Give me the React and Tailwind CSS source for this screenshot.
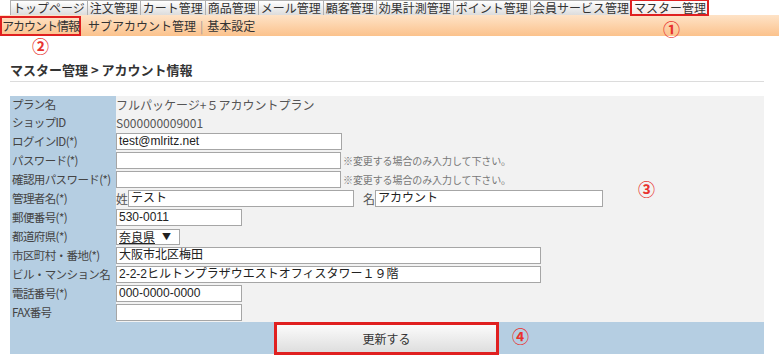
import React from "react";

const tabs = [
  "トップページ",
  "注文管理",
  "カート管理",
  "商品管理",
  "メール管理",
  "顧客管理",
  "効果計測管理",
  "ポイント管理",
  "会員サービス管理",
  "マスター管理",
];

const font = { fontFamily: '"Noto Sans CJK JP", "Liberation Sans", sans-serif' };

const Mark = ({ children, className }) => (
  <span
    className={`absolute text-[17px] leading-none font-bold text-[#e8322e] ${className}`}
  >
    {children}
  </span>
);

const Input = ({ value = "", w }) => (
  <div
    className={`${w} h-[17px] bg-white border border-[#a6a6a6] px-[2px] text-[12px] leading-[15px] text-[#222] overflow-hidden whitespace-nowrap`}
    style={{ fontFamily: '"Liberation Sans", "Noto Sans CJK JP", sans-serif' }}
  >
    {value}
  </div>
);

const Note = () => (
  <span className="ml-[2px] text-[10px] tracking-[-0.1px] text-[#777]">
    ※変更する場合のみ入力して下さい。
  </span>
);

const Row = ({ label, h = "h-[19px]", children }) => (
  <div className={`flex ${h}`}>
    <div className="w-[106px] shrink-0 bg-[#b5cee2] pl-[2px] flex items-center text-[11.5px] text-[#444] whitespace-nowrap tracking-[-0.6px]">
      {label}
    </div>
    <div className="flex-1 bg-[#f2f2f2] flex items-center text-[12px] text-[#555]">
      {children}
    </div>
  </div>
);

export default function App() {
  return (
    <div className="relative w-[779px] h-[363px] bg-white overflow-hidden" style={font}>
      {/* top tabs */}
      <div className="flex h-[15px] pl-[10px]">
        {tabs.map((t, i) => {
          const active = i === tabs.length - 1;
          return (
            <div
              key={t}
              className={`h-[15px] pl-[2px] pr-[2px] border-l border-t border-[#b0b0b0] text-[12px] leading-[14px] text-[#333] whitespace-nowrap ${
                active
                  ? "bg-gradient-to-b from-white to-[#f4e8e4] outline-2 outline-[#e02020] -outline-offset-1"
                  : "bg-gradient-to-b from-white to-[#dcdcdc]"
              }`}
            >
              {t}
            </div>
          );
        })}
      </div>

      {/* sub nav */}
      <div className="flex items-center h-[21px] bg-gradient-to-b from-[#fee3c7] to-[#fbc28c] text-[12px] text-[#333]">
        <span className="h-[20px] px-0 border-2 border-[#e02020] leading-[16px] tracking-[-1px]">
          アカウント情報
        </span>
        <span className="ml-[7px]">サブアカウント管理</span>
        <span className="mx-[4px] text-[#999]">|</span>
        <span>基本設定</span>
      </div>

      {/* heading */}
      <div className="ml-[10px] w-[754px] mt-[25px] pb-[2px] border-b border-[#dcdcdc] text-[13px] leading-[18px] font-bold text-[#333]">
        マスター管理 &gt; アカウント情報
      </div>

      {/* form table */}
      <div className="ml-[10px] w-[754px] mt-[14px]">
        <Row label="プラン名" h="h-[18px]">
          フルパッケージ+５アカウントプラン
        </Row>
        <Row label="ショップID" h="h-[18px]">
          S000000009001
        </Row>
        <Row label="ログインID(*)">
          <Input value="test@mlritz.net" w="w-[226px]" />
        </Row>
        <Row label="パスワード(*)">
          <Input w="w-[225px]" />
          <Note />
        </Row>
        <Row label="確認用パスワード(*)">
          <Input w="w-[225px]" />
          <Note />
        </Row>
        <Row label="管理者名(*)">
          <span>姓</span>
          <Input value="テスト" w="w-[226px]" />
          <span className="ml-[9px]">名</span>
          <Input value="アカウント" w="w-[228px]" />
        </Row>
        <Row label="郵便番号(*)">
          <Input value="530-0011" w="w-[126px]" />
        </Row>
        <Row label="都道府県(*)">
          <div className="w-[64px] h-[16px] bg-white border border-[#a6a6a6] flex items-center justify-between px-[2px] text-[12px] text-[#222]">
            <span className="underline leading-[14px]">奈良県</span>
            <span className="text-[9px] mr-[6px]">▼</span>
          </div>
        </Row>
        <Row label="市区町村・番地(*)">
          <Input value="大阪市北区梅田" w="w-[425px]" />
        </Row>
        <Row label="ビル・マンション名">
          <Input value="2-2-2ヒルトンプラザウエストオフィスタワー１９階" w="w-[425px]" />
        </Row>
        <Row label="電話番号(*)">
          <Input value="000-0000-0000" w="w-[126px]" />
        </Row>
        <Row label="FAX番号">
          <Input w="w-[126px]" />
        </Row>
        <div className="flex h-[32px] bg-[#b5cee2] pl-[264px]">
          <button className="w-[225px] h-[33px] border-[3px] border-[#e02020] bg-gradient-to-b from-[#fbfbfb] to-[#dedede] text-[12px] text-[#333]">
            更新する
          </button>
        </div>
      </div>

      {/* annotations */}
      <Mark className="left-[663px] top-[20px]">①</Mark>
      <Mark className="left-[32px] top-[37px]">②</Mark>
      <Mark className="left-[638px] top-[180px]">③</Mark>
      <Mark className="left-[512px] top-[327px]">④</Mark>
    </div>
  );
}
